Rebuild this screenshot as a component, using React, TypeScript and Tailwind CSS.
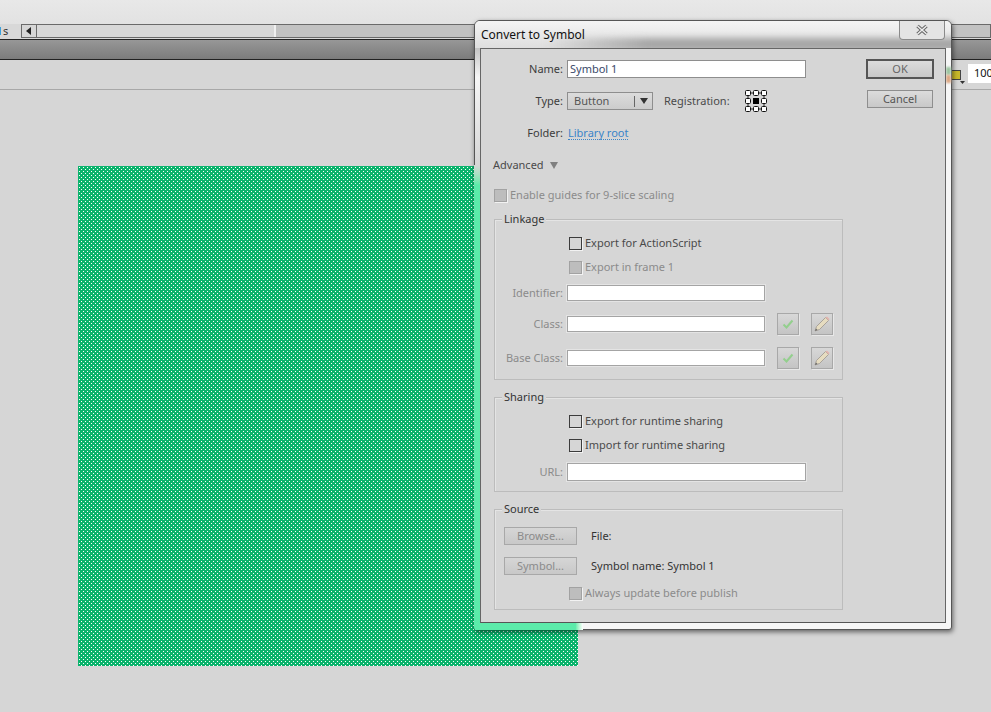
const font = { fontFamily: '"Noto Sans", "Liberation Sans", sans-serif' };

function Check({ off, label }: { off?: boolean; label: string }) {
  return (
    <div className="flex h-4 items-center">
      <span
        className={`h-[13px] w-[13px] border shadow-[1px_1px_0_#f2f2f2] ${
          off ? 'border-[#a2a2a2] bg-[#bdbdbd]' : 'border-[#3c3c3c] bg-[#d6d6d6]'
        }`}
      />
      <span className={`ml-[3px] ${off ? 'text-[#8b8b8b]' : 'text-[#4a4a4a]'}`}>{label}</span>
    </div>
  );
}

function Field({ label, width, off }: { label: string; width: string; off?: boolean }) {
  return (
    <div className="flex h-full items-center">
      <span className={`w-[68px] text-right ${off ? 'text-[#8b8b8b]' : 'text-[#3c3c3c]'}`}>{label}</span>
      <span className={`ml-1 h-full border border-[#a4a4a4] bg-white shadow-[0_0_0_1px_#e4e4e4] ${width}`} />
    </div>
  );
}

function SquareBtn({ children }: { children: React.ReactNode }) {
  return (
    <span className="ml-3 flex h-[22px] w-[22px] shrink-0 items-center justify-center border border-[#a8a8a8] bg-gradient-to-b from-[#d8d8d8] to-[#c4c4c4] shadow-[1px_1px_0_#e8e8e8]">
      {children}
    </span>
  );
}

function Tick() {
  return (
    <svg width="12" height="12" viewBox="0 0 12 12">
      <path d="M1.5 6.5 L4.5 9.5 L10.5 2.5" fill="none" stroke="#93cf8d" strokeWidth="2" />
    </svg>
  );
}

function Pencil() {
  return (
    <svg width="18" height="18" viewBox="0 0 18 18">
      <path d="M2 16 L3.5 11.5 L12.5 2.5 L15.5 5.5 L6.5 14.5 Z" fill="#e6dcc0" stroke="#a8a29a" strokeWidth="1" />
      <path d="M12.5 2.5 L14 1.5 L16.5 4 L15.5 5.5 Z" fill="#e3b4ae" />
      <path d="M2 16 L3 13.5 L4.5 15 Z" fill="#666" />
    </svg>
  );
}

function Group({ title, height, children }: { title: string; height: string; children: React.ReactNode }) {
  return (
    <div className={`relative w-[349px] border border-[#bcbcbc] shadow-[inset_1px_1px_0_#e4e4e4] ${height}`}>
      <span className="absolute -top-[9px] left-[7px] bg-[#d6d6d6] px-[2px] leading-[15px] text-[#333]">{title}</span>
      {children}
    </div>
  );
}

function Registration() {
  const cells = [0, 1, 2, 3, 4, 5, 6, 7, 8];
  return (
    <svg width="22" height="22" viewBox="0 0 22 22" className="ml-[15px]">
      <rect x="3" y="3" width="16" height="16" fill="none" stroke="#222" />
      {cells.map((c) => {
        const x = 0.5 + (c % 3) * 8;
        const y = 0.5 + Math.floor(c / 3) * 8;
        return (
          <rect
            key={c}
            x={x}
            y={y}
            width="5"
            height="5"
            rx={c === 4 ? 0 : 1}
            fill={c === 4 ? '#000' : '#fff'}
            stroke={c === 4 ? '#000' : '#111'}
          />
        );
      })}
    </svg>
  );
}

export default function App() {
  return (
    <div className="relative flex h-[712px] w-[991px] flex-col overflow-hidden bg-[#d6d6d6] text-[11px]" style={font}>
      {/* app chrome behind the dialog */}
      <div className="h-6 bg-gradient-to-b from-[#e8e8e8] to-[#e2e2e2]" />
      <div className="flex h-[15px] items-start bg-[#d8d8d8] text-[#333]">
        <span className="relative w-[21px] pl-[3px] leading-[14px]">
          s
          <span className="absolute left-0 top-[3px] h-[8px] w-[1px] bg-[#3aa0dc]" />
        </span>
        <div className="flex h-[14px] flex-1 border border-[#6a6a6a] bg-[#c2c2c2]">
          <span className="flex w-[15px] items-center justify-center border-r border-[#6a6a6a] bg-[#d6d6d6]">
            <svg width="6" height="8" viewBox="0 0 6 8">
              <path d="M5 0 V8 L0 4 Z" fill="#222" />
            </svg>
          </span>
          <span className="w-[239px] border-r-2 border-[#f0f0f0] bg-[#d8d8d8]" />
        </div>
      </div>
      <div className="h-[21px] border-y border-[#222] bg-gradient-to-b from-[#979797] to-[#7c7c7c]" />
      <div className="flex h-[30px] items-start justify-end border-b border-[#a8a8a8] pt-[4px]">
        <svg width="22" height="20" viewBox="0 0 22 20" className="mr-[3px]">
          <rect x="8.5" y="6.5" width="9" height="9" fill="#c9b92a" stroke="#444" />
          <path d="M17 17 H22 L19.5 20 Z" fill="#333" />
        </svg>
        <span className="h-[19px] w-[23px] bg-white pl-[6px] leading-[18px] text-[#111]">100</span>
      </div>
      <div className="pl-[78px] pt-[76px]">
        <svg width="500" height="500" className="block">
          <defs>
            <pattern id="dots" width="4" height="4" patternUnits="userSpaceOnUse">
              <rect width="4" height="4" fill="#0ab36c" />
              <rect x="1" y="1" width="1" height="1" fill="#fff" />
              <rect x="3" y="3" width="1" height="1" fill="#fff" />
            </pattern>
          </defs>
          <rect width="500" height="500" fill="url(#dots)" />
        </svg>
      </div>

      {/* Convert to Symbol dialog */}
      <div className="absolute left-[474px] top-5 flex h-[610px] w-[478px] flex-col rounded-t-[6px] rounded-b-[3px] border border-[#555] bg-[#f6f6f6] px-[5px] pb-[6px] shadow-[1px_2px_5px_rgba(0,0,0,0.55)]">
        {/* glass frame: what shows through the window border */}
        <div className="absolute inset-x-0 top-0 h-[27px] overflow-hidden rounded-t-[5px] bg-gradient-to-b from-[#f4f4f4] to-[#dedede]">
          <div className="absolute -right-2 left-[70px] top-[17px] h-[13px] bg-gradient-to-r from-transparent to-[#a6a6a6] to-[25%] blur-[3px]" />
        </div>
        <div className="absolute left-0 top-[27px] h-[117px] w-[5px] bg-gradient-to-b from-[#c4c4c4] via-[#f6f6f6] via-[25%] to-[#d6d6d6]" />
        <div className="absolute -left-px top-[144px] h-[20px] w-[6px] bg-gradient-to-b from-[#d6d6d6] to-[#5cebaa]" />
        <div className="absolute -bottom-px -left-px top-[164px] w-[6px] rounded-bl-[3px] bg-[#5cebaa]" />
        <div className="absolute -bottom-px left-0 h-[7px] w-[108px] bg-gradient-to-r from-[#5cebaa] from-[93%] to-[#fff]" />
        <div className="absolute right-0 top-[46px] h-[8px] w-[5px] bg-[#9cc4a0] blur-[1px]" />
        <div className="absolute right-0 top-[54px] h-[8px] w-[5px] bg-[#dca884] blur-[1px]" />
        <div className="relative flex h-[27px] shrink-0 items-center justify-between">
          <span className="pl-px pt-[1px] text-[12px] text-[#111]">Convert to Symbol</span>
          <span className="mr-[1px] flex h-[19px] w-[46px] -translate-y-1 items-center justify-center rounded-b-[4px] border border-t-0 border-[#8a8a8a] bg-[#e4e4e4]">
            <svg width="14" height="12" viewBox="0 0 14 12">
              <path d="M2.5 2 L11.5 10 M11.5 2 L2.5 10" stroke="#666" strokeWidth="3.5" />
              <path d="M2.5 2 L11.5 10 M11.5 2 L2.5 10" stroke="#eee" strokeWidth="1.5" />
            </svg>
          </span>
        </div>
        <div className="relative flex flex-1 border border-[#666] border-b-[#555] bg-[#d6d6d6] pl-[13px]">
          <div className="w-[349px] shrink-0">
            <div className="mt-[11px] flex h-[18px] items-center">
              <span className="w-[69px] text-right text-[#3c3c3c]">Name:</span>
              <span className="ml-1 h-full w-[239px] border border-[#8e8e8e] bg-white pl-[2px] leading-[15px] text-[#3a4a6a]">Symbol 1</span>
            </div>
            <div className="mt-[14px] flex h-[18px] items-center">
              <span className="w-[69px] text-right text-[#3c3c3c]">Type:</span>
              <span className="ml-1 flex h-full w-[86px] items-center border border-[#8e8e8e] bg-gradient-to-b from-[#dcdcdc] to-[#cccccc] pl-[6px] text-[#555]">
                Button
                <span className="ml-auto flex h-[11px] w-[18px] items-center justify-center border-l border-[#666]">
                  <svg width="8" height="6" viewBox="0 0 8 6">
                    <path d="M0 0 H8 L4 6 Z" fill="#333" />
                  </svg>
                </span>
              </span>
              <span className="ml-[11px] text-[#4a4a4a]">Registration:</span>
              <Registration />
            </div>
            <div className="mt-[14px] flex h-[18px] items-center">
              <span className="w-[69px] text-right text-[#3c3c3c]">Folder:</span>
              <span className="ml-[5px] border-b border-dotted border-[#3a84c8] leading-[13px] text-[#3a84c8]">Library root</span>
            </div>
            <div className="-ml-px mt-[14px] flex h-[18px] items-center text-[#4a4a4a]">
              Advanced
              <svg width="8" height="7" viewBox="0 0 8 7" className="ml-[6px]">
                <path d="M0 0 H8 L4 7 Z" fill="#808080" />
              </svg>
            </div>
            <div className="mt-[13px]">
              <Check off label="Enable guides for 9-slice scaling" />
            </div>

            <div className="mt-4">
              <Group title="Linkage" height="h-[161px]">
                <div className="pl-[74px] pt-[15px]">
                  <Check label="Export for ActionScript" />
                  <div className="mt-2">
                    <Check off label="Export in frame 1" />
                  </div>
                </div>
                <div className="mt-[10px] h-4">
                  <Field off label="Identifier:" width="w-[198px]" />
                </div>
                <div className="mt-[15px] flex h-4 items-center">
                  <Field off label="Class:" width="w-[198px]" />
                  <SquareBtn><Tick /></SquareBtn>
                  <SquareBtn><Pencil /></SquareBtn>
                </div>
                <div className="mt-[18px] flex h-4 items-center">
                  <Field off label="Base Class:" width="w-[198px]" />
                  <SquareBtn><Tick /></SquareBtn>
                  <SquareBtn><Pencil /></SquareBtn>
                </div>
              </Group>
            </div>

            <div className="mt-[17px]">
              <Group title="Sharing" height="h-[95px]">
                <div className="pl-[74px] pt-[15px]">
                  <Check label="Export for runtime sharing" />
                  <div className="mt-2">
                    <Check label="Import for runtime sharing" />
                  </div>
                </div>
                <div className="mt-[10px] h-[18px]">
                  <Field off label="URL:" width="w-[239px]" />
                </div>
              </Group>
            </div>

            <div className="mt-[17px]">
              <Group title="Source" height="h-[101px]">
                <div className="flex items-center pl-[9px] pt-[17px]">
                  <span className="flex h-[18px] w-[73px] items-center justify-center border border-[#a8a8a8] bg-gradient-to-b from-[#d6d6d6] to-[#c8c8c8] text-[#8b8b8b]">Browse...</span>
                  <span className="ml-[14px] text-[#333]">File:</span>
                </div>
                <div className="mt-3 flex items-center pl-[9px]">
                  <span className="flex h-[18px] w-[73px] items-center justify-center border border-[#a8a8a8] bg-gradient-to-b from-[#d6d6d6] to-[#c8c8c8] text-[#8b8b8b]">Symbol...</span>
                  <span className="ml-[14px] text-[#333]">Symbol name: Symbol 1</span>
                </div>
                <div className="mt-[10px] pl-[74px]">
                  <Check off label="Always update before publish" />
                </div>
              </Group>
            </div>
          </div>

          <div className="ml-[23px] flex flex-col items-center pt-[10px]">
            <span className="flex h-[20px] w-[68px] items-center justify-center border-2 border-[#555] bg-gradient-to-b from-[#dcdcdc] to-[#c8c8c8] text-[#666]">OK</span>
            <span className="mt-[11px] flex h-[18px] w-[66px] items-center justify-center border border-[#8e8e8e] bg-gradient-to-b from-[#dcdcdc] to-[#c8c8c8] text-[#555]">Cancel</span>
          </div>
        </div>
      </div>
    </div>
  );
}
